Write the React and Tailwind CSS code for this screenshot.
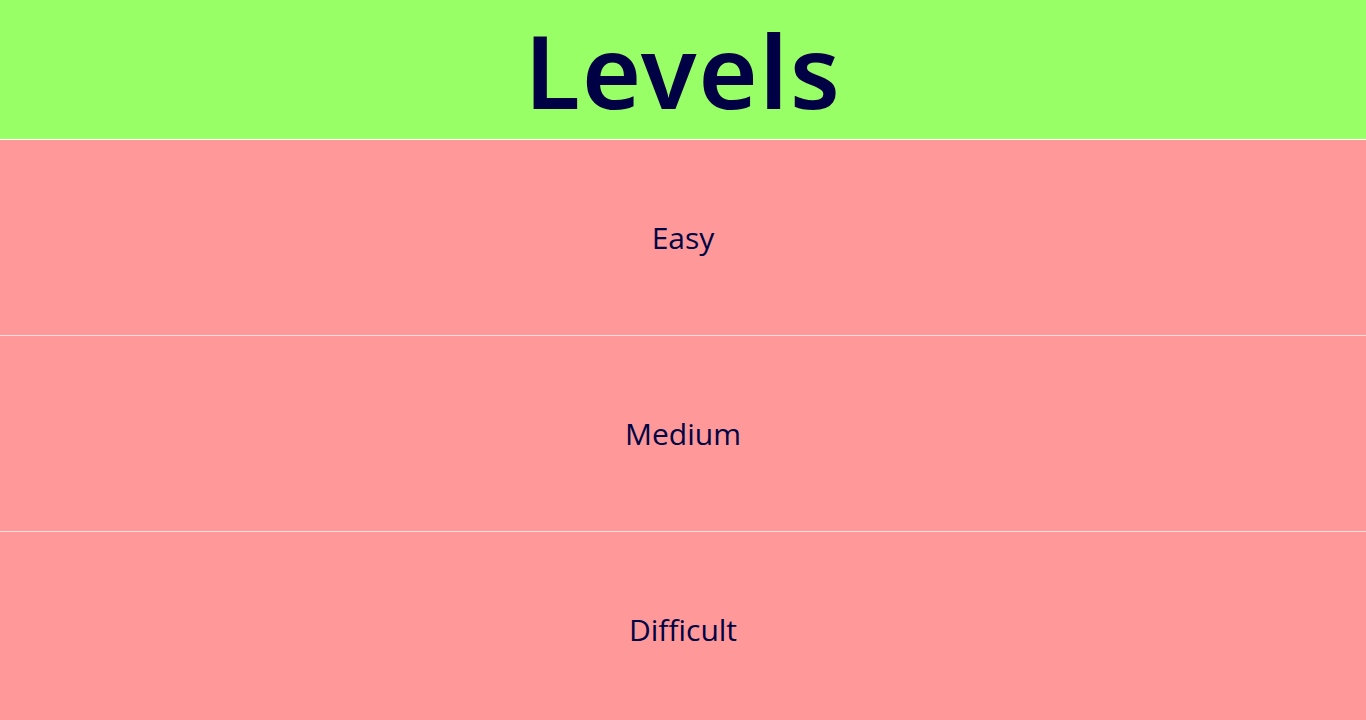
export default function App() {
  const levels = ["Easy", "Medium", "Difficult"];
  return (
    <div className="w-[1366px] h-[720px] overflow-hidden bg-[#ff9999]">
      <div className="h-[140px] bg-[#99ff66] border-b border-white flex items-start justify-center">
        <h1 className="text-[102px] leading-[139px] text-[#000044] font-semibold tracking-[1.5px] font-['Noto_Sans',sans-serif]">
          Levels
        </h1>
      </div>
      {levels.map((l) => (
        <div
          key={l}
          className="h-[196px] border-b border-[#ffdddd] flex items-center justify-center"
        >
          <span className="text-[30px] text-[#000044] font-['Open_Sans',sans-serif]">{l}</span>
        </div>
      ))}
    </div>
  );
}
